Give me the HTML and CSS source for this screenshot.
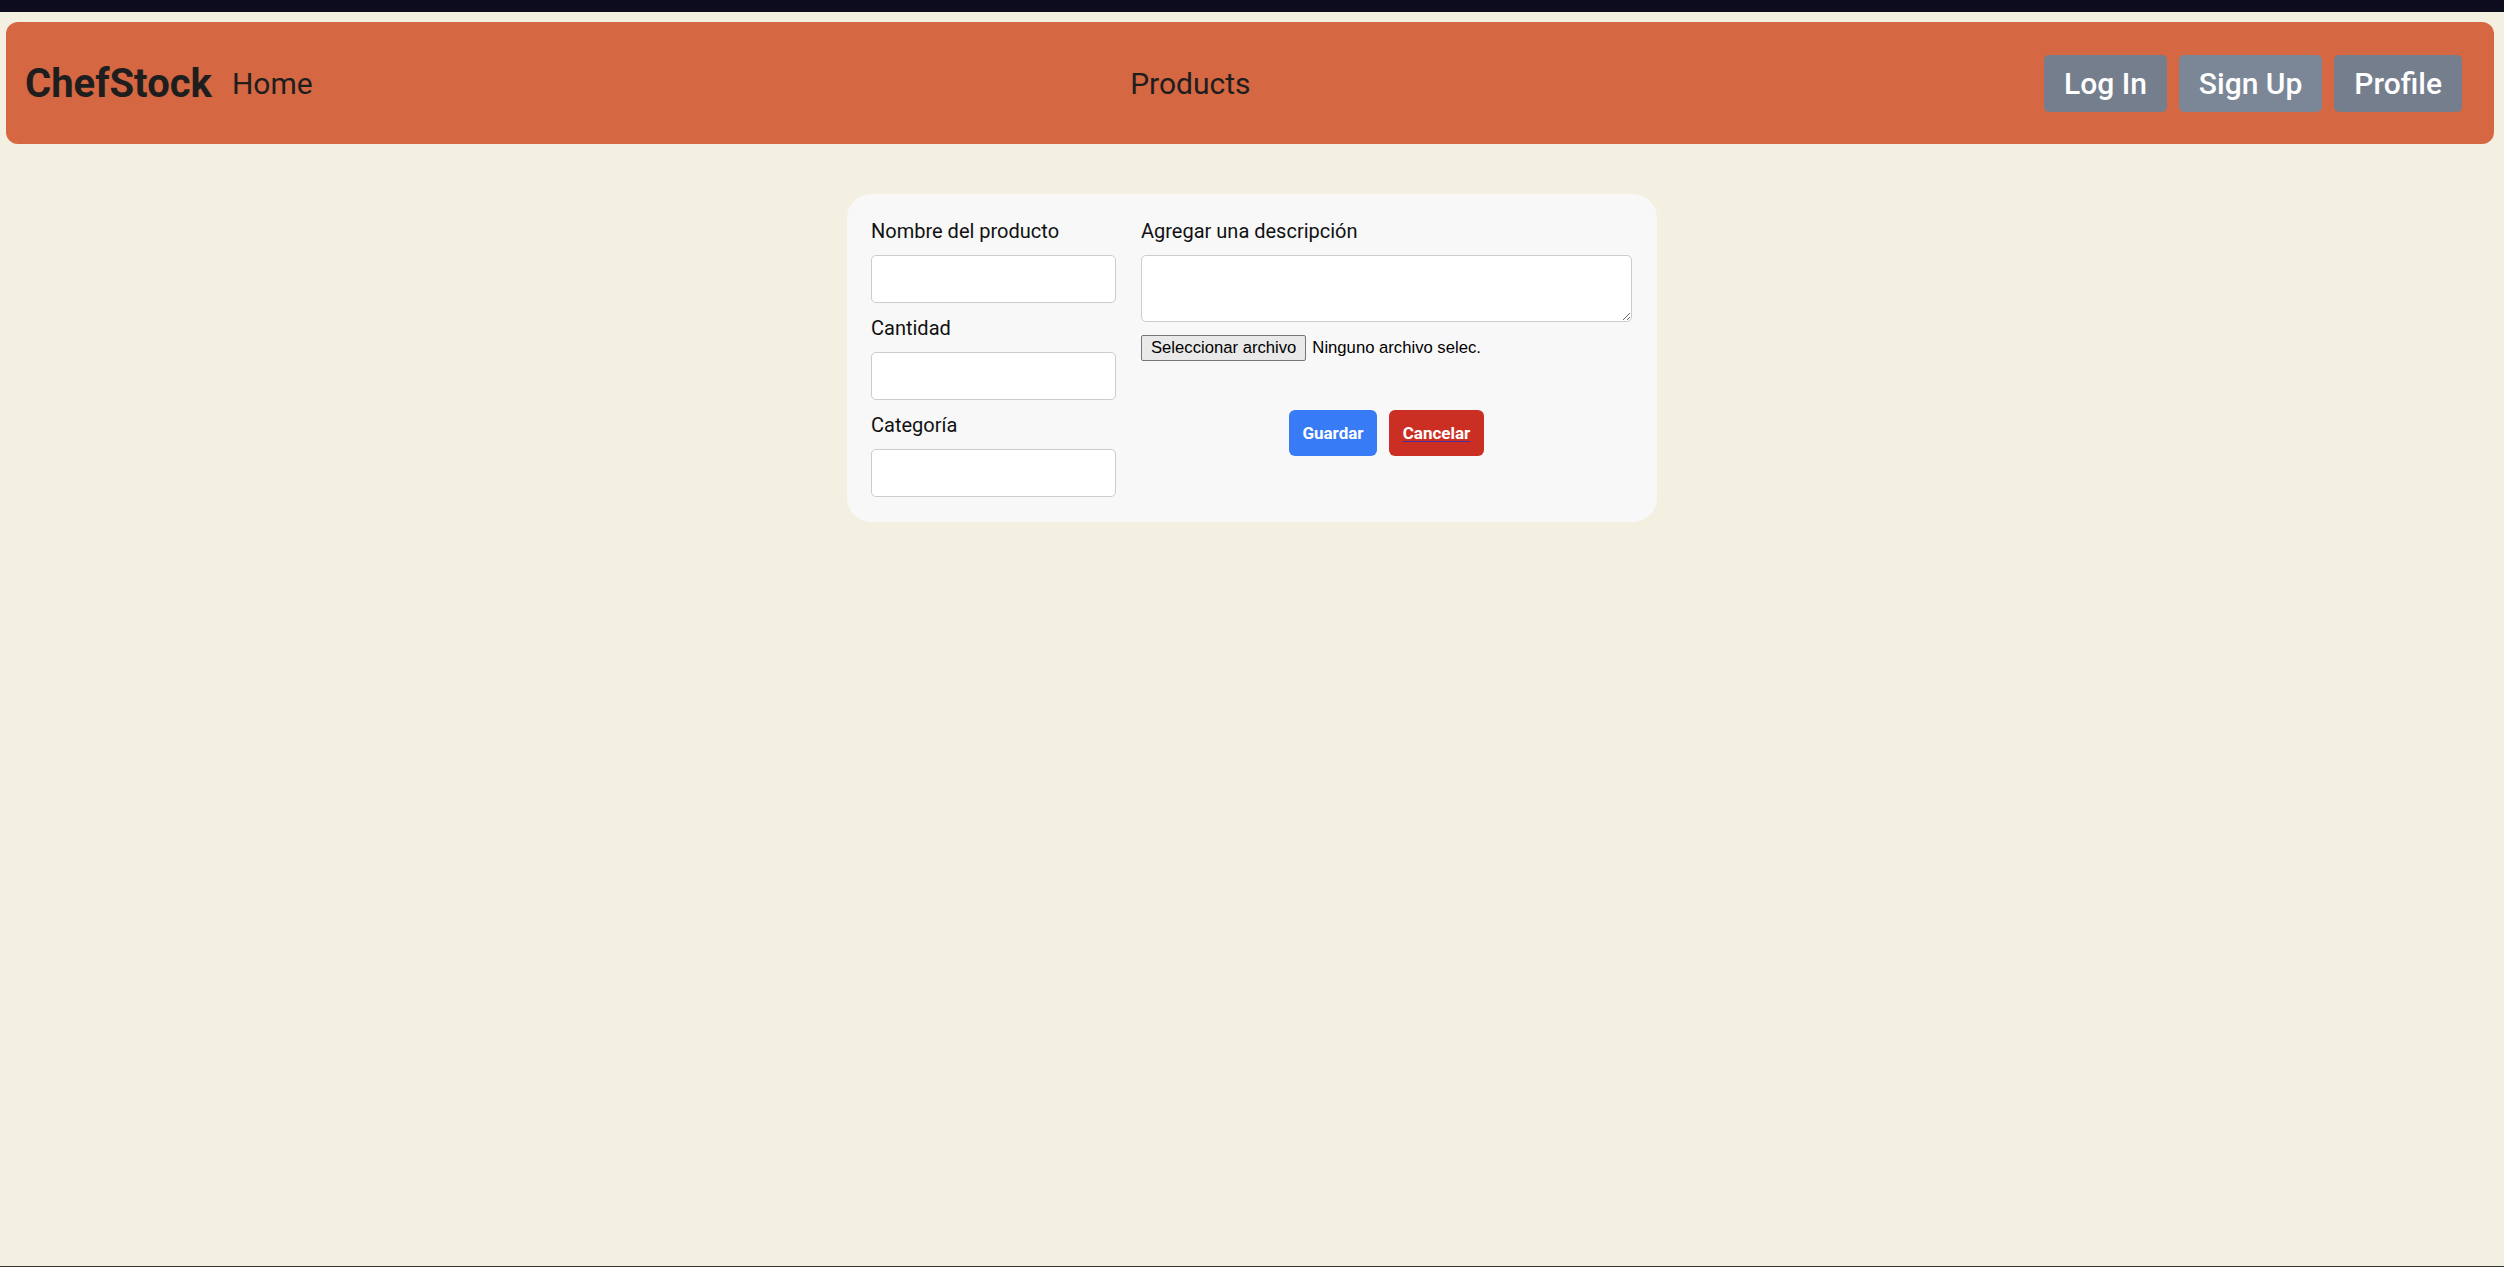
FILE: index.html
```html
<!DOCTYPE html>
<html lang="es">
<head>
<meta charset="utf-8">
<title>ChefStock</title>
<link rel="stylesheet" href="styles.css">
</head>
<body>
<div class="topstrip"></div>
<nav class="navbar">
  <div class="nav-left">
    <a class="brand" href="#">ChefStock</a>
    <a class="nav-link" href="#">Home</a>
  </div>
  <a class="nav-link nav-center" href="#">Products</a>
  <div class="nav-right">
    <button class="nav-btn">Log In</button>
    <button class="nav-btn nav-btn-alt">Sign Up</button>
    <button class="nav-btn">Profile</button>
  </div>
</nav>
<main class="main">
  <form class="card">
    <div class="col-left">
      <div class="field">
        <label class="label" for="nombre">Nombre del producto</label>
        <input class="input" id="nombre" type="text">
      </div>
      <div class="field">
        <label class="label" for="cantidad">Cantidad</label>
        <input class="input" id="cantidad" type="text">
      </div>
      <div class="field">
        <label class="label" for="categoria">Categoría</label>
        <input class="input" id="categoria" type="text">
      </div>
    </div>
    <div class="col-right">
      <label class="label" for="desc">Agregar una descripción</label>
      <textarea class="textarea" id="desc"></textarea>
      <label class="file-row">
        <span class="file-btn">Seleccionar archivo</span>
        <span class="file-name">Ninguno archivo selec.</span>
        <input class="file-hidden" type="file">
      </label>
      <div class="actions">
        <button type="button" class="btn btn-save">Guardar</button>
        <a class="btn btn-cancel" href="#"><span class="btn-cancel-text">Cancelar</span></a>
      </div>
    </div>
  </form>
</main>
<div class="bottomline"></div>
</body>
</html>
```
FILE: styles.css
```css
html, body {
  margin: 0;
  padding: 0;
}
body {
  background: #f3efe1;
  font-family: Roboto, "Liberation Sans", Arial, sans-serif;
  height: 100vh;
  overflow: hidden;
  display: flex;
  flex-direction: column;
}
.topstrip {
  height: 12px;
  background: #0d0c1e;
  flex-shrink: 0;
}
.navbar {
  margin: 10px 10px 0 6px;
  height: 122px;
  background: #d56742;
  border-radius: 12px;
  display: flex;
  align-items: center;
  justify-content: space-between;
  padding: 0 32px 0 19px;
  box-sizing: border-box;
  flex-shrink: 0;
}
.nav-left {
  display: flex;
  align-items: center;
  gap: 20px;
}
.brand {
  font-size: 40px;
  font-weight: 700;
  color: #1e1e1e;
  text-decoration: none;
}
.nav-link {
  font-size: 30px;
  color: #1e1e1e;
  text-decoration: none;
}
.nav-center {
  margin-left: 24px;
}
.nav-right {
  display: flex;
  align-items: center;
  gap: 12px;
}
.nav-btn {
  height: 57px;
  padding: 0 20px;
  border: none;
  border-radius: 5px;
  background: #747e8d;
  color: #ffffff;
  font-family: Roboto, sans-serif;
  font-size: 30px;
  font-weight: 500;
  cursor: pointer;
}
.nav-btn-alt {
  background: #7b8796;
}
.main {
  flex: 1;
  padding-top: 50px;
}
.card {
  width: 810px;
  margin: 0 auto;
  box-sizing: border-box;
  background: #f8f8f8;
  border-radius: 24px;
  padding: 25px 25px 25px 24px;
  display: grid;
  grid-template-columns: 245px 1fr;
  column-gap: 25px;
}
.col-left {
  display: flex;
  flex-direction: column;
  gap: 13px;
}
.field {
  display: flex;
  flex-direction: column;
}
.label {
  display: block;
  font-size: 20px;
  line-height: 24px;
  color: #111111;
  margin-bottom: 12px;
}
.input {
  height: 48px;
  box-sizing: border-box;
  border: 1px solid #cccccc;
  border-radius: 5px;
  background: #ffffff;
  margin: 0;
}
.col-right {
  display: flex;
  flex-direction: column;
}
.textarea {
  height: 67px;
  box-sizing: border-box;
  border: 1px solid #cccccc;
  border-radius: 5px;
  background: #ffffff;
  margin: 0;
  resize: vertical;
}
.file-row {
  margin-top: 13px;
  display: flex;
  align-items: center;
  gap: 6px;
  font-family: "Liberation Sans", Arial, sans-serif;
  font-size: 16.67px;
  color: #000000;
}
.file-btn {
  height: 26px;
  box-sizing: border-box;
  padding: 0 9px;
  border: 1px solid #767676;
  background: #e9e9e9;
  display: flex;
  align-items: center;
  border-radius: 2px;
}
.file-hidden {
  display: none;
}
.actions {
  margin-top: 49px;
  display: flex;
  justify-content: center;
  gap: 12px;
}
.btn {
  height: 46px;
  box-sizing: border-box;
  border: none;
  border-radius: 6px;
  color: #ffffff;
  font-family: Roboto, sans-serif;
  font-size: 17px;
  font-weight: 700;
  display: flex;
  align-items: center;
  justify-content: center;
  cursor: pointer;
}
.btn-save {
  width: 88px;
  background: #377cf6;
}
.btn-cancel {
  width: 95px;
  background: #cb2f24;
  color: #4b2fa0;
  text-decoration: underline;
  text-underline-offset: 2px;
}
.btn-cancel-text {
  color: #ffffff;
}
.bottomline {
  height: 1px;
  background: #333333;
  flex-shrink: 0;
}
```
